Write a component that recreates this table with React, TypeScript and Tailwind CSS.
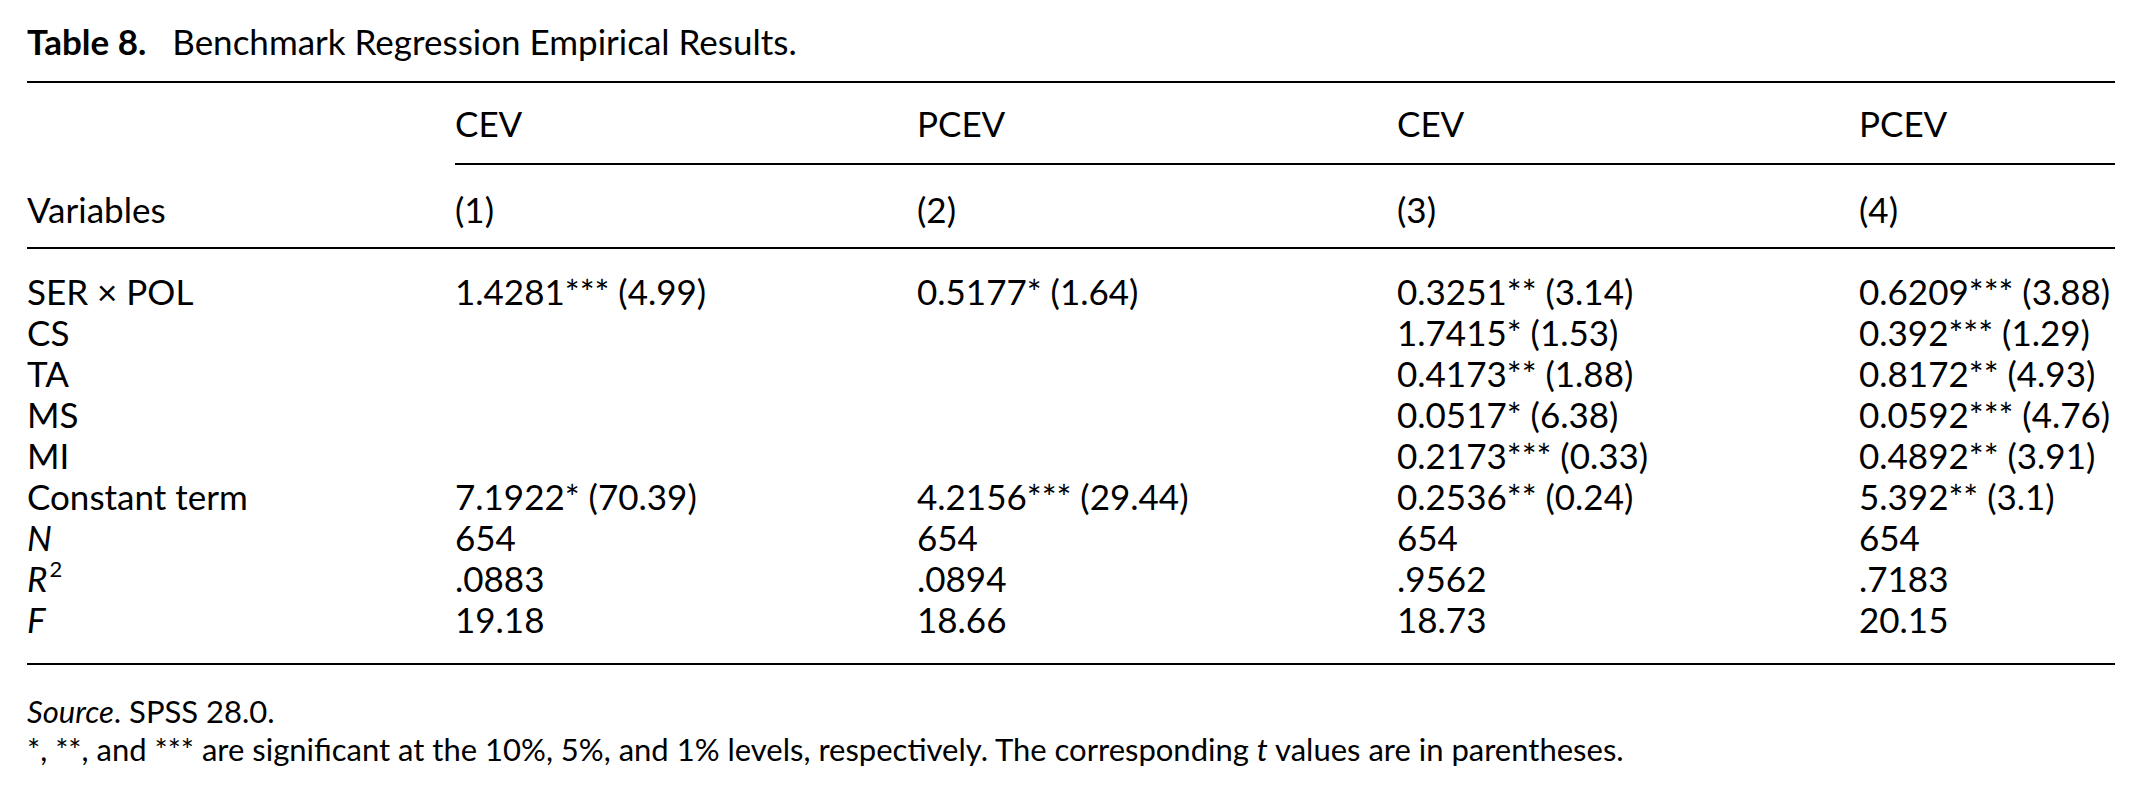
const ROWS: { label: React.ReactNode; cells: string[] }[] = [
  { label: "SER × POL", cells: ["1.4281*** (4.99)", "0.5177* (1.64)", "0.3251** (3.14)", "0.6209*** (3.88)"] },
  { label: "CS", cells: ["", "", "1.7415* (1.53)", "0.392*** (1.29)"] },
  { label: "TA", cells: ["", "", "0.4173** (1.88)", "0.8172** (4.93)"] },
  { label: "MS", cells: ["", "", "0.0517* (6.38)", "0.0592*** (4.76)"] },
  { label: "MI", cells: ["", "", "0.2173*** (0.33)", "0.4892** (3.91)"] },
  { label: "Constant term", cells: ["7.1922* (70.39)", "4.2156*** (29.44)", "0.2536** (0.24)", "5.392** (3.1)"] },
  { label: <i>N</i>, cells: ["654", "654", "654", "654"] },
  {
    label: (
      <>
        <i>R</i>
        <sup className="text-[22px] relative -top-[15px] ml-[2px]">2</sup>
      </>
    ),
    cells: [".0883", ".0894", ".9562", ".7183"],
  },
  { label: <i>F</i>, cells: ["19.18", "18.66", "18.73", "20.15"] },
];

const COLS = "grid grid-cols-[428px_462px_480px_462px_256px] whitespace-nowrap";

export default function App() {
  return (
    <div className="w-[2142px] h-[799px] overflow-hidden bg-white text-black px-[27px] pt-[20px] font-['Lato',sans-serif] text-[35px] leading-[41px]">
      <h1 className="text-[35px] leading-[42px]">
        <b>Table 8.</b>
        <span className="ml-[26px]">Benchmark Regression Empirical Results.</span>
      </h1>

      <div className="mt-[19px] border-t-2 border-black">
        <div className={`${COLS} pt-[20px]`}>
          <div />
          <div className="col-span-4 grid grid-cols-[462px_480px_462px_256px] pb-[19px] border-b-2 border-black">
            <div>CEV</div>
            <div>PCEV</div>
            <div>CEV</div>
            <div>PCEV</div>
          </div>
        </div>
        <div className={`${COLS} pt-[24px] pb-[17px] border-b-2 border-black`}>
          <div>Variables</div>
          <div>(1)</div>
          <div>(2)</div>
          <div>(3)</div>
          <div>(4)</div>
        </div>

        <div className="pt-[22px] pb-[23px] border-b-2 border-black">
          {ROWS.map((row, i) => (
            <div key={i} className={COLS}>
              <div>{row.label}</div>
              {row.cells.map((c, j) => (
                <div key={j}>{c}</div>
              ))}
            </div>
          ))}
        </div>
      </div>

      <div className="mt-[27px] text-[31px] leading-[38px]">
        <p>
          <i>Source</i>. SPSS 28.0.
        </p>
        <p>
          *, **, and *** are significant at the 10%, 5%, and 1% levels, respectively. The corresponding <i>t</i> values are in
          parentheses.
        </p>
      </div>
    </div>
  );
}
